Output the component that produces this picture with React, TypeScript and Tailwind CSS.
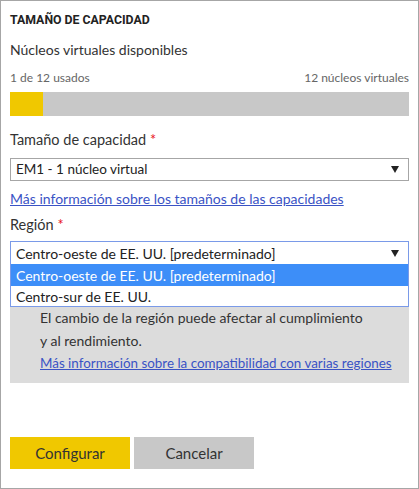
import React from "react";

const font = { fontFamily: '"Segoe UI", Lato, "Open Sans", sans-serif' };

function Arrow() {
  return (
    <svg width="8" height="7" viewBox="0 0 8 7" className="shrink-0">
      <path d="M0 0 L8 0 L4 7 Z" fill="#222" />
    </svg>
  );
}

export default function App() {
  return (
    <div
      className="w-[419px] h-[489px] bg-white border border-[#a6a6a6] text-[#333] relative overflow-hidden"
      style={font}
    >
      <div className="px-[9px] flex flex-col">
        <div
          className="h-[20px] mt-[9px] flex items-center text-[12.3px] font-bold text-[#222]"
          style={{ fontFamily: 'Roboto, "Noto Sans", sans-serif' }}
        >
          TAMAÑO DE CAPACIDAD
        </div>
        <div className="h-[20px] mt-[9px] flex items-center text-[14px]">
          Núcleos virtuales disponibles
        </div>
        <div className="h-[18px] mt-[10px] flex items-center justify-between text-[12px] text-[#666]">
          <span>1 de 12 usados</span>
          <span>12 núcleos virtuales</span>
        </div>
        <div className="h-[24px] mt-[5px] bg-[#c8c8c8] flex">
          <div className="w-[33px] h-full bg-[#f0c800]" />
        </div>
        <div className="h-[20px] mt-[14px] flex items-center text-[14.5px]">
          Tamaño de capacidad <span className="text-[#e81123] ml-[4px]">*</span>
        </div>
        <div className="h-[23px] mt-[8px] border border-[#a6a6a6] flex items-center justify-between pl-[5px] pr-[9px] text-[13.5px] text-[#222]">
          <span>EM1 - 1 núcleo virtual</span>
          <Arrow />
        </div>
        <div className="h-[22px] mt-[6px] flex items-center text-[14px] text-[#3a53c5] underline">
          Más información sobre los tamaños de las capacidades
        </div>
        <div className="h-[20px] mt-[6px] flex items-center text-[14.5px]">
          Región <span className="text-[#e81123] ml-[4px]">*</span>
        </div>
        <div className="relative mt-[6px]">
          <div className="h-[24px] border border-[#7a9ae8] flex items-center justify-between pl-[5px] pr-[9px] text-[14px] text-[#222]">
            <span>Centro-oeste de EE. UU. [predeterminado]</span>
            <Arrow />
          </div>
          <div className="absolute left-0 right-0 top-[23px] z-10 border border-[#7a9ae8] border-t-0 bg-white text-[14px]">
            <div className="h-[22px] bg-[#3d8ef8] text-white flex items-center pl-[5px]">
              Centro-oeste de EE. UU. [predeterminado]
            </div>
            <div className="h-[20px] flex items-center pl-[5px] text-[#222]">
              Centro-sur de EE. UU.
            </div>
          </div>
        </div>
        <div className="mt-[16px] bg-[#dcdcdc] pl-[30px] pr-0 pt-[2px] pb-[8px] text-[14px] leading-[23px] text-[#333] whitespace-nowrap">
          <div>Es posible que ya haya datos ubicados en otra región y que</div>
          <div>El cambio de la región puede afectar al cumplimiento</div>
          <div>y al rendimiento.</div>
          <div className="text-[#3a53c5] underline text-[13.4px]">
            Más información sobre la compatibilidad con varias regiones
          </div>
        </div>
        <div className="mt-[54px] flex gap-[4px]">
          <button className="w-[120px] h-[32px] bg-[#f0c800] text-[15px] text-[#333]">
            Configurar
          </button>
          <button className="w-[120px] h-[32px] bg-[#c8c8c8] text-[15px] text-[#333]">
            Cancelar
          </button>
        </div>
      </div>
    </div>
  );
}
